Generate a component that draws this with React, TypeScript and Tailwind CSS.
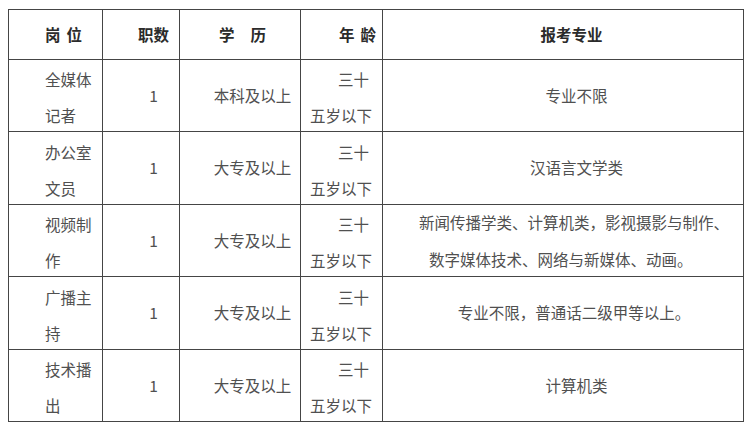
import React from 'react';

interface Row {
  post: [string, string];
  count: string;
  edu: string;
  major: React.ReactNode;
}

const rows: Row[] = [
  { post: ['全媒体', '记者'], count: '1', edu: '本科及以上', major: <span className="pl-[27px]">专业不限</span> },
  { post: ['办公室', '文员'], count: '1', edu: '大专及以上', major: <span className="pl-[27px]">汉语言文学类</span> },
  {
    post: ['视频制', '作'],
    count: '1',
    edu: '大专及以上',
    major: (
      <div className="w-full text-left leading-[37px]">
        <div className="pl-[36px]">新闻传播学类、计算机类，影视摄影与制作、</div>
        <div className="pl-[46px]">数字媒体技术、网络与新媒体、动画。</div>
      </div>
    ),
  },
  { post: ['广播主', '持'], count: '1', edu: '大专及以上', major: <span className="pl-[22px]">专业不限，普通话二级甲等以上。</span> },
  { post: ['技术播', '出'], count: '1', edu: '大专及以上', major: <span className="pl-[27px]">计算机类</span> },
];

const rowHeights = ['h-[72px]', 'h-[73px]', 'h-[72px]', 'h-[73px]', 'h-[72px]'];

const cell = 'border-r border-b border-[#454545] flex items-center';
const head = 'h-[50px] justify-center font-bold text-[#2b2b2b]';

export default function App() {
  return (
    <div
      className="w-[750px] h-[429px] bg-white pl-2 pt-[9px] text-[15.5px] text-[#505050]"
      style={{ fontFamily: '"Noto Sans CJK SC", "Noto Sans", sans-serif' }}
    >
      <div className="w-[736px] border-l border-t border-[#454545] grid grid-cols-[94px_77px_121px_82px_361px]">
        {/* header */}
        <div className={`${cell} ${head} pl-4 gap-[6px]`}>
          <span>岗</span>
          <span>位</span>
        </div>
        <div className={`${cell} ${head} pl-[25px]`}>职数</div>
        <div className={`${cell} ${head} pl-[5px] gap-[16px]`}>
          <span>学</span>
          <span>历</span>
        </div>
        <div className={`${cell} ${head} pl-8 gap-[6px]`}>
          <span>年</span>
          <span>龄</span>
        </div>
        <div className={`${cell} ${head} pl-[17px]`}>报考专业</div>

        {rows.map((r, i) => (
          <React.Fragment key={i}>
            <div className={`${cell} ${rowHeights[i]} pl-[36px]`}>
              <div className="leading-[36px] pt-[3px]">
                <div>{r.post[0]}</div>
                <div>{r.post[1]}</div>
              </div>
            </div>
            <div className={`${cell} ${rowHeights[i]} justify-center pl-[25px]`}>{r.count}</div>
            <div className={`${cell} ${rowHeights[i]} justify-center pl-[25px]`}>{r.edu}</div>
            <div className={`${cell} ${rowHeights[i]} justify-end pr-[10px]`}>
              <div className="leading-[36px] pt-[3px] text-right">
                <div className="pr-[3px]">三十</div>
                <div>五岁以下</div>
              </div>
            </div>
            <div className={`${cell} ${rowHeights[i]} justify-center whitespace-nowrap`}>{r.major}</div>
          </React.Fragment>
        ))}
      </div>
    </div>
  );
}
